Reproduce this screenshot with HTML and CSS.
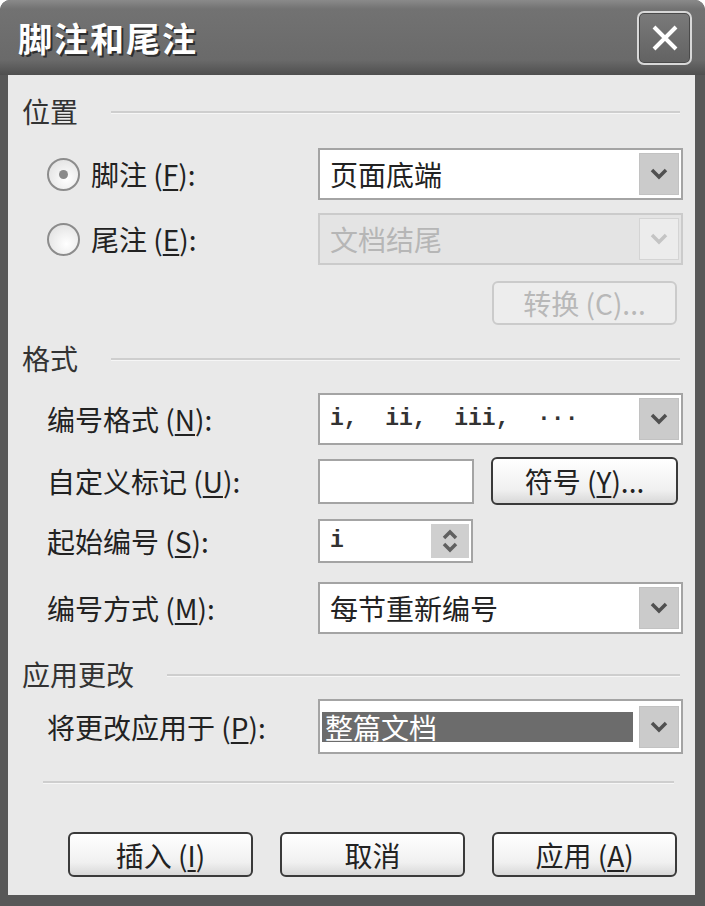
FILE: index.html
```html
<!DOCTYPE html>
<html lang="zh-CN">
<head>
    <meta charset="UTF-8">
    <title>脚注和尾注</title>
    <link rel="stylesheet" href="styles.css">
</head>
<body>

<div class="window">
    <div class="titlebar">
        <span class="title">脚注和尾注</span>
        <button class="close" type="button">
            <svg width="30" height="30" viewBox="0 0 30 30"><path d="M4 4 L26 26 M26 4 L4 26" stroke="#fff" stroke-width="4" fill="none"/></svg>
        </button>
    </div>

    <div class="client">
        <div class="group"><span>位置</span><div class="line"></div></div>

        <div class="row first">
            <label class="radio"><span class="circle checked"></span>脚注 (<u>F</u>):</label>
            <div class="combo">
                <span class="value">页面底端</span>
                <span class="drop"><svg width="18" height="12" viewBox="0 0 18 12"><polyline points="2,2 9,9 16,2" fill="none" stroke="#505050" stroke-width="3.5"/></svg></span>
            </div>
        </div>

        <div class="row gap13">
            <label class="radio"><span class="circle"></span>尾注 (<u>E</u>):</label>
            <div class="combo disabled">
                <span class="value">文档结尾</span>
                <span class="drop"><svg width="18" height="12" viewBox="0 0 18 12"><polyline points="2,2 9,9 16,2" fill="none" stroke="#c4c4c4" stroke-width="3.5"/></svg></span>
            </div>
        </div>

        <div class="row gap16">
            <span></span>
            <button class="btn disabled convert" type="button">转换 (C)...</button>
        </div>

        <div class="group gap15"><span>格式</span><div class="line"></div></div>

        <div class="row gap17">
            <label>编号格式 (<u>N</u>):</label>
            <div class="combo">
                <span class="value mono">i,&nbsp;&nbsp;ii,&nbsp;&nbsp;iii,&nbsp;&nbsp;&middot;&middot;&middot;</span>
                <span class="drop"><svg width="18" height="12" viewBox="0 0 18 12"><polyline points="2,2 9,9 16,2" fill="none" stroke="#505050" stroke-width="3.5"/></svg></span>
            </div>
        </div>

        <div class="row gap12">
            <label>自定义标记 (<u>U</u>):</label>
            <div class="pair">
                <input class="field" type="text">
                <button class="btn symbol" type="button">符号 (<u>Y</u>)...</button>
            </div>
        </div>

        <div class="row gap14">
            <label>起始编号 (<u>S</u>):</label>
            <div class="spin">
                <span class="value mono">i</span>
                <span class="arrows">
                    <svg width="18" height="26" viewBox="0 0 18 26"><polyline points="3,10 9,4 15,10" fill="none" stroke="#606060" stroke-width="3.5"/><polyline points="3,16 9,22 15,16" fill="none" stroke="#606060" stroke-width="3.5"/></svg>
                </span>
            </div>
        </div>

        <div class="row gap19">
            <label>编号方式 (<u>M</u>):</label>
            <div class="combo">
                <span class="value">每节重新编号</span>
                <span class="drop"><svg width="18" height="12" viewBox="0 0 18 12"><polyline points="2,2 9,9 16,2" fill="none" stroke="#505050" stroke-width="3.5"/></svg></span>
            </div>
        </div>

        <div class="group gap22"><span>应用更改</span><div class="line"></div></div>

        <div class="row gap7">
            <label>将更改应用于 (<u>P</u>):</label>
            <div class="combo tall">
                <span class="selected">整篇文档</span>
                <span class="drop"><svg width="18" height="12" viewBox="0 0 18 12"><polyline points="2,2 9,9 16,2" fill="none" stroke="#505050" stroke-width="3.5"/></svg></span>
            </div>
        </div>

        <div class="separator"></div>

        <div class="actions">
            <button class="btn" type="button">插入 (<u>I</u>)</button>
            <button class="btn" type="button">取消</button>
            <button class="btn" type="button">应用 (<u>A</u>)</button>
        </div>
    </div>
</div>

</body>
</html>
```

FILE: styles.css
```css
body {
    margin: 0;
    background: #ffffff;
    font-family: "Noto Sans CJK SC", "Liberation Sans", sans-serif;
}

.window {
    width: 705px;
    height: 906px;
    background: #585858;
    border-radius: 10px 10px 0 0;
    display: flex;
    flex-direction: column;
}

.titlebar {
    height: 75px;
    box-sizing: border-box;
    display: flex;
    align-items: center;
    padding: 0 13px 0 18px;
    border-radius: 10px 10px 0 0;
    background: linear-gradient(#8a8a8a, #727272 12%, #6a6a6a 80%, #4f4f4f);
}

.title {
    color: #ffffff;
    font-size: 34px;
    font-weight: bold;
    letter-spacing: 2px;
    line-height: 1;
    text-shadow: 2px 2px 0 #2e2e2e;
}

.close {
    margin-left: auto;
    width: 55px;
    height: 54px;
    border: 2px solid #d8d8d8;
    border-radius: 7px;
    background: linear-gradient(#7a7a7a, #626262);
    box-shadow: inset 0 0 0 1px #4a4a4a;
    display: flex;
    align-items: center;
    justify-content: center;
    padding: 0;
}

.client {
    flex: 1;
    margin: 0 10px 11px 8px;
    background: #e9e9e9;
    padding: 18px 12px 0 14px;
}

.group {
    display: flex;
    align-items: center;
    height: 36px;
    font-size: 28px;
    color: #333333;
    line-height: 1;
}

.group .line {
    flex: 1;
    margin: 2px 3px 0 33px;
    border-top: 2px solid #cecece;
    border-bottom: 1px solid #f6f6f6;
}

.row {
    display: grid;
    grid-template-columns: 296px 365px;
    align-items: center;
}

.row label {
    font-size: 28px;
    color: #222222;
    line-height: 1;
    padding-left: 25px;
    display: flex;
    align-items: center;
}

.row u {
    text-decoration-thickness: 2px;
    text-underline-offset: 3px;
}

.first { margin-top: 19px; }
.gap7 { margin-top: 7px; }
.gap12 { margin-top: 12px; }
.gap13 { margin-top: 13px; }
.gap14 { margin-top: 14px; }
.gap15 { margin-top: 15px; }
.gap16 { margin-top: 16px; }
.gap17 { margin-top: 17px; }
.gap19 { margin-top: 19px; }
.gap22 { margin-top: 22px; }

.circle {
    width: 29px;
    height: 29px;
    border: 2px solid #8c8c8c;
    border-radius: 50%;
    background: radial-gradient(circle at 60% 65%, #ffffff, #dcdcdc);
    margin-right: 11px;
    display: flex;
    align-items: center;
    justify-content: center;
}

.circle.checked::after {
    content: "";
    width: 9px;
    height: 9px;
    border-radius: 50%;
    background: #8a8a8a;
}

.combo {
    height: 52px;
    box-sizing: border-box;
    border: 2px solid #a4a4a4;
    background: #ffffff;
    display: flex;
    align-items: center;
    padding: 0 2px 0 10px;
}

.combo .value {
    font-size: 28px;
    color: #222222;
    line-height: 1;
}

.combo .drop {
    margin-left: auto;
    width: 40px;
    height: 42px;
    box-sizing: border-box;
    background: #cbcbcb;
    border: 1px solid #c2c2c2;
    display: flex;
    align-items: center;
    justify-content: center;
}

.combo.disabled {
    border-color: #cbcbcb;
    background: #e4e4e4;
}

.combo.disabled .value {
    color: #b6b6b6;
}

.combo.disabled .drop {
    background: #ececec;
    border-color: #d4d4d4;
}

.combo.tall {
    height: 55px;
    padding-left: 2px;
}

.selected {
    width: 311px;
    height: 30px;
    background: #6c6c6c;
    color: #ffffff;
    font-size: 28px;
    line-height: 30px;
    padding-left: 3px;
    box-sizing: border-box;
}

.mono {
    font-family: "Liberation Mono", "DejaVu Sans Mono", monospace;
    font-size: 23px !important;
    font-weight: bold;
    color: #333333 !important;
}

.btn {
    height: 44px;
    width: 185px;
    box-sizing: border-box;
    border: 2px solid #3a3a3a;
    border-radius: 6px;
    background: linear-gradient(#ffffff, #f0f0f0 70%, #d8d8d8);
    font-family: "Noto Sans CJK SC", "Liberation Sans", sans-serif;
    font-size: 28px;
    line-height: 1;
    color: #222222;
    padding: 0;
}

.btn u {
    text-decoration-thickness: 2px;
    text-underline-offset: 3px;
}

.btn.disabled {
    border-color: #cbcbcb;
    background: #ededed;
    color: #b8b8b8;
}

.convert {
    justify-self: end;
    margin-right: 6px;
}

.pair {
    display: flex;
    align-items: center;
    gap: 17px;
}

.field {
    width: 156px;
    height: 45px;
    box-sizing: border-box;
    border: 2px solid #a4a4a4;
    background: #ffffff;
    margin: 0;
}

.symbol {
    width: 187px;
    height: 48px;
}

.spin {
    width: 155px;
    height: 44px;
    box-sizing: border-box;
    border: 2px solid #a4a4a4;
    background: #ffffff;
    display: flex;
    align-items: center;
    padding: 0 2px 0 10px;
}

.spin .arrows {
    margin-left: auto;
    width: 38px;
    height: 34px;
    background: #cfcfcf;
    display: flex;
    align-items: center;
    justify-content: center;
}

.separator {
    margin: 27px 9px 0 21px;
    border-top: 2px solid #cecece;
    border-bottom: 1px solid #f6f6f6;
}

.actions {
    display: flex;
    gap: 27px;
    margin: 48px 0 0 46px;
}

.actions .btn {
    height: 45px;
}
```
